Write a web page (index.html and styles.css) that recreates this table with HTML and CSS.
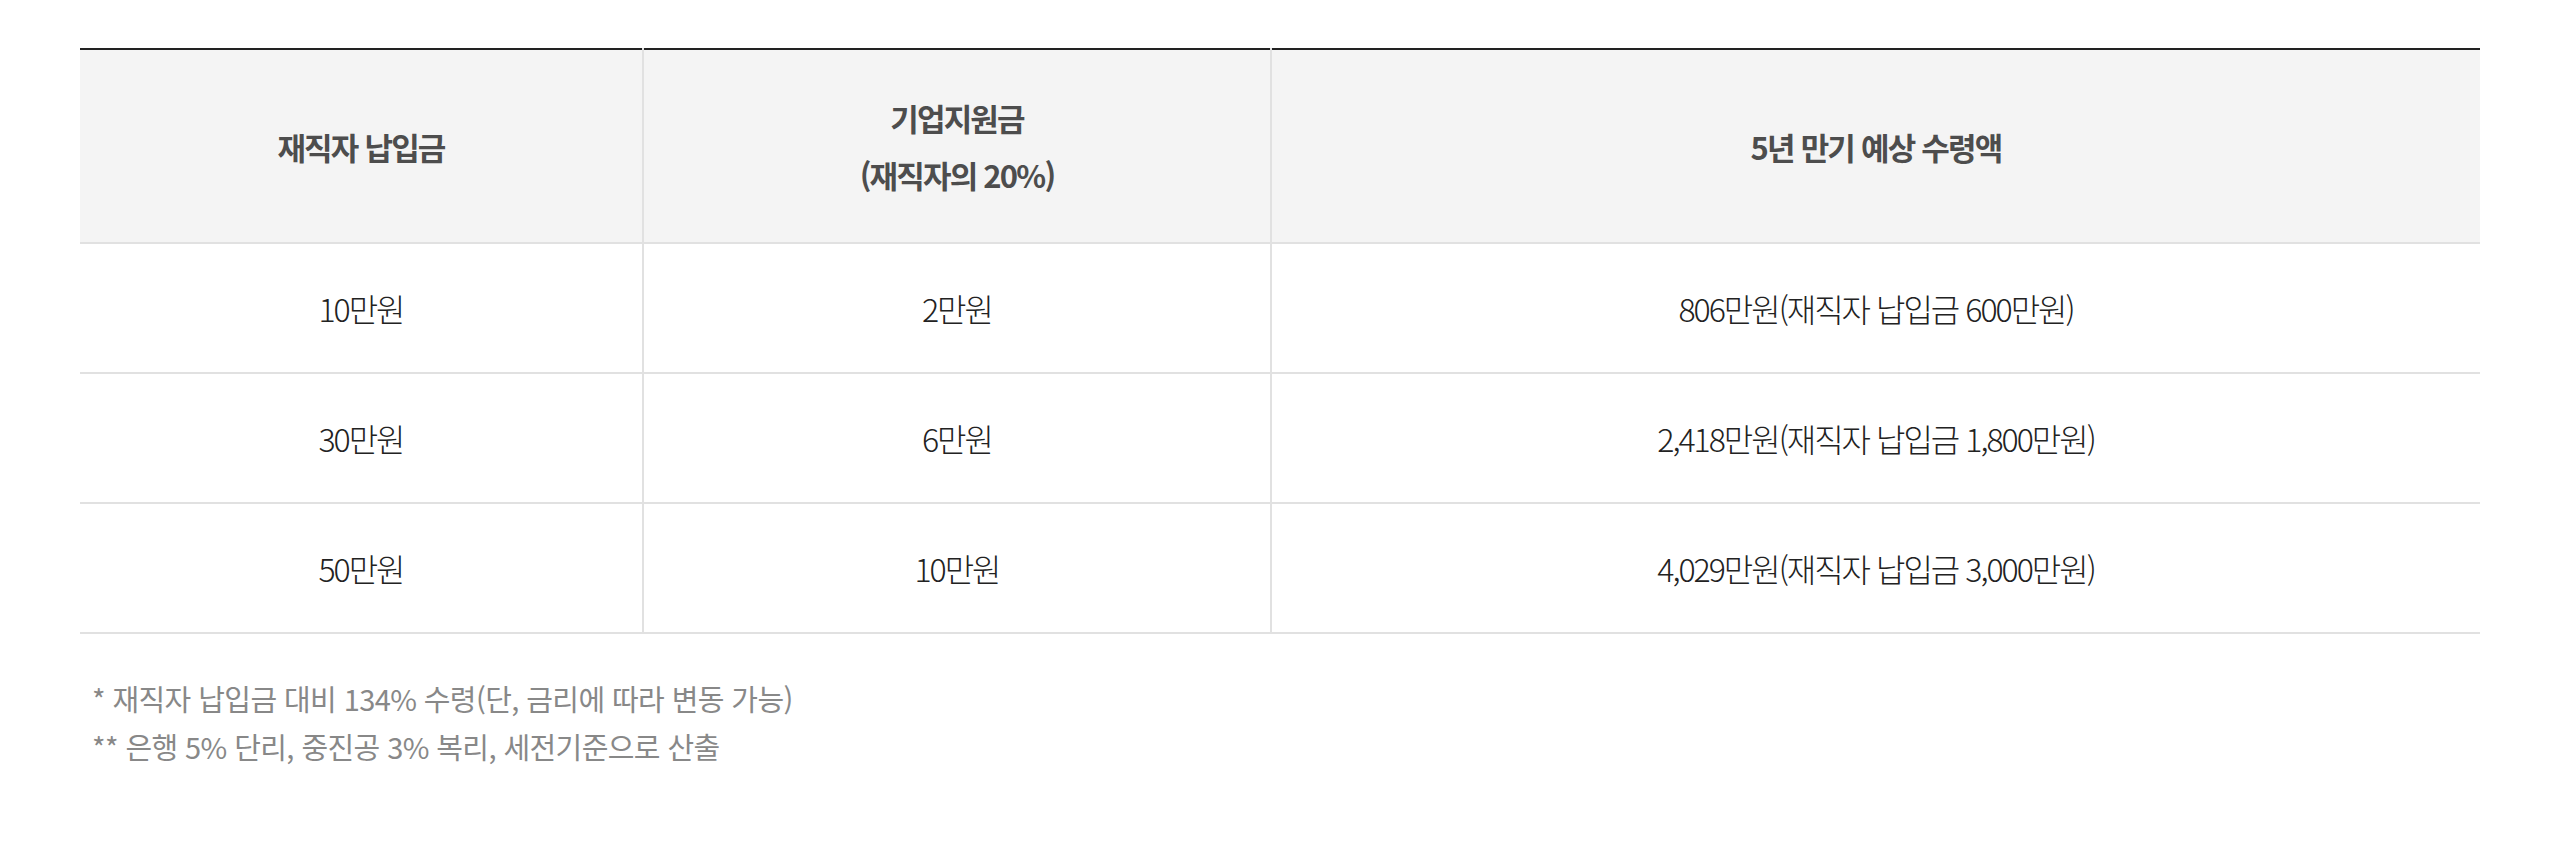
FILE: index.html
```html
<!DOCTYPE html>
<html lang="ko">
<head>
<meta charset="utf-8">
<title>내일채움공제 예상 수령액</title>
<link rel="stylesheet" href="styles.css">
</head>
<body>
<div class="wrap">
  <table class="tbl">
    <colgroup>
      <col class="c1">
      <col class="c2">
      <col class="c3">
    </colgroup>
    <thead>
      <tr>
        <th>재직자 납입금</th>
        <th>기업지원금<br>(재직자의 20%)</th>
        <th>5년 만기 예상 수령액</th>
      </tr>
    </thead>
    <tbody>
      <tr>
        <td>10만원</td>
        <td>2만원</td>
        <td>806만원(재직자 납입금 600만원)</td>
      </tr>
      <tr>
        <td>30만원</td>
        <td>6만원</td>
        <td>2,418만원(재직자 납입금 1,800만원)</td>
      </tr>
      <tr>
        <td>50만원</td>
        <td>10만원</td>
        <td>4,029만원(재직자 납입금 3,000만원)</td>
      </tr>
    </tbody>
  </table>
  <ul class="notes">
    <li>* 재직자 납입금 대비 134% 수령(단, 금리에 따라 변동 가능)</li>
    <li>** 은행 5% 단리, 중진공 3% 복리, 세전기준으로 산출</li>
  </ul>
</div>
</body>
</html>
```
FILE: styles.css
```css
html, body {
  margin: 0;
  padding: 0;
  background: #fff;
}
body {
  font-family: "Noto Sans CJK KR", "Noto Sans", sans-serif;
}
.wrap {
  padding: 48px 0 0 80px;
  width: 2400px;
}
.tbl {
  width: 2400px;
  table-layout: fixed;
  border-collapse: collapse;
  border-top: 2px solid #222;
}
.c1 { width: 563px; }
.c2 { width: 628px; }
.c3 { width: 1209px; }
.tbl th,
.tbl td {
  text-align: center;
  vertical-align: middle;
  border-bottom: 2px solid #e1e1e1;
  border-left: 2px solid #e1e1e1;
  padding: 0;
}
.tbl th:first-child,
.tbl td:first-child {
  border-left: 0;
}
.tbl th {
  background: #f4f4f4;
  color: #4d4d4d;
  font-size: 31px;
  font-weight: 700;
  letter-spacing: -1.8px;
  line-height: 57px;
  height: 192px;
}
.tbl td {
  color: #222;
  font-size: 32px;
  font-weight: 300;
  letter-spacing: -2px;
  line-height: 40px;
  height: 128px;
}
.notes {
  list-style: none;
  margin: 40px 0 0;
  padding: 0 0 0 12px;
  color: #888;
  font-size: 29px;
  font-weight: 400;
  line-height: 48px;
  letter-spacing: -0.6px;
}
```
